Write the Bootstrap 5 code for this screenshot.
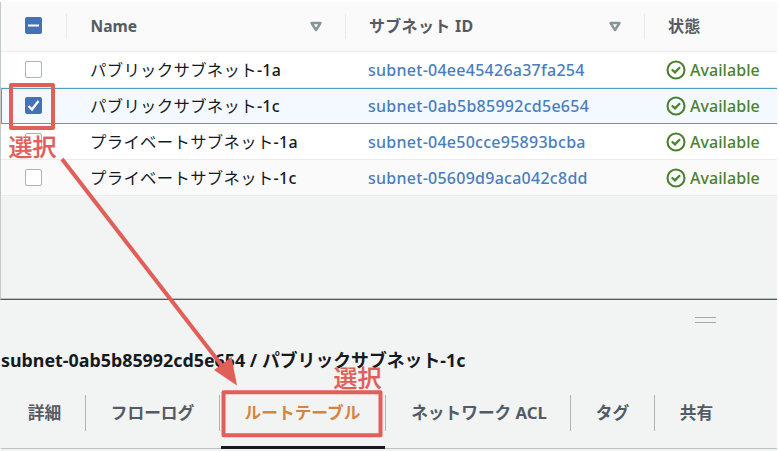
<!DOCTYPE html>
<html lang="ja">
<head>
<meta charset="utf-8">
<meta name="viewport" content="width=device-width, initial-scale=1">
<title>サブネット</title>
<link href="https://cdn.jsdelivr.net/npm/bootstrap@5.3.0/dist/css/bootstrap.min.css" rel="stylesheet">
<style>
body{width:779px;height:451px;overflow:hidden;background:#fff;padding:2px 2px 0 0;font:500 16px/20px "Noto Sans","Noto Sans CJK JP",sans-serif;color:#16191f}
.stage{height:449px;background:#f2f3f3}
.list-pane{height:298px;border-left:1px solid #c3caca;border-bottom:1px solid #545b64;box-shadow:0 -1px 0 #b9bec2 inset}
.grid-row{display:grid;grid-template-columns:65px 279px 299px 1fr;height:36px;align-items:center;background:#fff;border-bottom:1px solid #eaeded}
.grid-head{height:50px;background:#fafafa;color:#545b64;font-weight:700}
.grid-head>div+div{border-left:1px solid #e7eaea;height:25px;padding-right:23px}
.grid-row>div+div{padding-left:23px}
.grid-head>div+div{padding-left:24px}
.grid-row>div:first-child{padding-left:24px}
.picked-row>div:first-child{padding-left:23px}
.alt{background:#fafafa}
.picked-row{background:#f3f9fe;border:1px solid #4b9fc3;border-right:0;grid-template-columns:64px 279px 299px 1fr}
.box{width:17px;height:17px;border:1px solid #a9b4b5;border-radius:2px;background:#fff}
.box-on{border-color:#4472b4;background:#4472b4}
.picked-row .box{position:relative;top:-1px}
svg{display:block}
.h-name{font-size:15.6px;margin-left:-.5px;position:relative;top:-1px}
.h-id,.h-state{letter-spacing:.3px;margin-left:-1px;position:relative;top:-1px}
.grid-row>.nm{letter-spacing:.3px;padding-left:24px}
.jp{font-size:16.4px;font-weight:400}
.idtext{color:#4a7dbd;letter-spacing:.26px}
.okay{color:#4d8130;letter-spacing:.06px}
.okay svg{margin-right:4px;margin-left:-1px}
.tri{margin-right:0}
.grip-line{padding:17px 61px 0 0}
.grip{width:21px;height:6px;border-top:1px solid #a5a8aa;border-bottom:1px solid #a5a8aa}
.detail-title{font-size:17.85px;line-height:20px;font-weight:700;margin:0;padding:27px 0 21px 1px;white-space:nowrap}
.tabs-line{height:58px;border-bottom:1px solid #b8c2c2;color:#545b64;font-weight:700;margin-left:1px;font-size:16.7px}
.tab{height:58px;position:relative;padding-top:12px;padding-left:1px;text-align:center;white-space:nowrap}
.tab+.tab::before{content:"";position:absolute;left:0;top:4px;width:1px;height:36px;background:#aab7b8}
.t1{width:84px;padding-left:3px}.t2{width:134px}.t3{width:166px;color:#d78440}.t4{width:185px;padding-left:3px}.t5{width:84px}.t6{width:84px}
.t3::after{content:"";position:absolute;left:2px;right:0;bottom:0;height:3px;background:#16191f}
.overlay{position:absolute;left:0;top:0;pointer-events:none}
.note{font:500 24px "Noto Sans CJK JP",sans-serif;fill:#e05f59;stroke:#e05f59;stroke-width:.2px}
</style>
<script src="https://cdn.jsdelivr.net/npm/bootstrap@5.3.0/dist/js/bootstrap.bundle.min.js"></script>
</head>
<body class="position-relative">
<svg width="0" height="0" class="position-absolute"><defs>
<g id="tri"><path d="M1.5 2H10.5L6 9Z" fill="none" stroke="#879596" stroke-width="2.4" stroke-linejoin="round"/></g>
<g id="ok"><circle cx="10" cy="10" r="8.5" fill="none" stroke="#4d8130" stroke-width="2.1"/><path d="M5.8 9.5L9 12.3L14 7.2" fill="none" stroke="#4d8130" stroke-width="2.3"/></g>
</defs></svg>
<main class="stage">
<section class="list-pane">
<div class="grid-row grid-head">
<div><div class="box box-on position-relative" style="top:-1.5px"><svg width="15" height="15"><path d="M2 7.5H13" stroke="#fff" stroke-width="2"/></svg></div></div>
<div class="d-flex justify-content-between align-items-center"><span class="h-name">Name</span><svg class="tri" width="12" height="11"><use href="#tri"/></svg></div>
<div class="d-flex justify-content-between align-items-center"><span class="h-id">サブネット ID</span><svg class="tri" width="12" height="11"><use href="#tri"/></svg></div>
<div class="d-flex align-items-center"><span class="h-state">状態</span></div>
</div>
<div class="grid-row"><div><div class="box"></div></div><div class="nm"><span class="jp">パブリックサブネット</span>-1a</div><div class="idtext">subnet-04ee45426a37fa254</div><div class="okay d-flex align-items-center"><svg width="20" height="20"><use href="#ok"/></svg><span>Available</span></div></div>
<div class="grid-row picked-row"><div><div class="box box-on"><svg width="15" height="15"><path d="M2.5 8L6 11.5L12.5 3" fill="none" stroke="#fff" stroke-width="2.3"/></svg></div></div><div class="nm"><span class="jp">パブリックサブネット</span>-1c</div><div class="idtext">subnet-0ab5b85992cd5e654</div><div class="okay d-flex align-items-center"><svg width="20" height="20"><use href="#ok"/></svg><span>Available</span></div></div>
<div class="grid-row"><div><div class="box"></div></div><div class="nm"><span class="jp">プライベートサブネット</span>-1a</div><div class="idtext">subnet-04e50cce95893bcba</div><div class="okay d-flex align-items-center"><svg width="20" height="20"><use href="#ok"/></svg><span>Available</span></div></div>
<div class="grid-row alt"><div><div class="box"></div></div><div class="nm"><span class="jp">プライベートサブネット</span>-1c</div><div class="idtext">subnet-05609d9aca042c8dd</div><div class="okay d-flex align-items-center"><svg width="20" height="20"><use href="#ok"/></svg><span>Available</span></div></div>
</section>
<section>
<div class="grip-line d-flex justify-content-end"><div class="grip"></div></div>
<h1 class="detail-title">subnet-0ab5b85992cd5e654 / パブリックサブネット-1c</h1>
<nav class="tabs-line d-flex">
<div class="tab t1">詳細</div><div class="tab t2">フローログ</div><div class="tab t3">ルートテーブル</div><div class="tab t4">ネットワーク ACL</div><div class="tab t5">タグ</div><div class="tab t6">共有</div>
</nav>
</section>
</main>
<svg class="overlay" width="779" height="451">
<g fill="none" stroke="#e05f59" stroke-width="4" stroke-linejoin="round"><rect x="11" y="85" width="42" height="43"/><rect x="223.5" y="392.3" width="157" height="43"/></g>
<path d="M62 159L226 371" stroke="#e05f59" stroke-width="4"/><path d="M237 385.5L214 370L231.5 357Z" fill="#e05f59"/>
<text class="note" x="8.5" y="156">選択</text><text class="note" x="333.5" y="386.5">選択</text>
</svg>
</body>
</html>
